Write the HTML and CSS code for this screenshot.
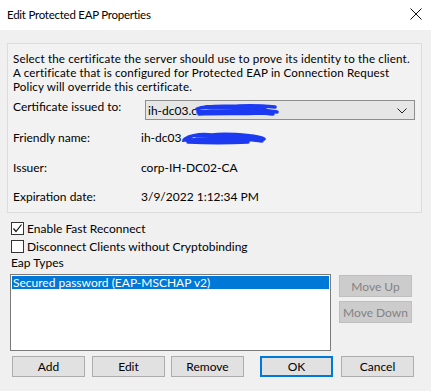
FILE: index.html
```html
<!DOCTYPE html>
<html lang="en">
<head>
    <meta charset="UTF-8">
    <title>Edit Protected EAP Properties</title>
    <link rel="stylesheet" href="styles.css">
</head>
<body>
    <div class="titlebar">
        <span class="title">Edit Protected EAP Properties</span>
        <svg class="close" width="12" height="12" viewBox="0 0 12 12">
            <path d="M0.5 0.5 L11.5 11.5 M11.5 0.5 L0.5 11.5" stroke="#111" stroke-width="1" fill="none"/>
        </svg>
    </div>

    <div class="content">
        <div class="group">
            <div class="intro">
                <div>Select the certificate the server should use to prove its identity to the client.</div>
                <div>A certificate that is configured for Protected EAP in Connection Request</div>
                <div>Policy will override this certificate.</div>
            </div>

            <div class="row row-combo">
                <span class="label">Certificate issued to:</span>
                <div class="combo">
                    <span class="value">ih-dc03.c</span>
                    <svg class="scribble" width="84" height="14" viewBox="0 0 84 14">
                        <path d="M2 6 C12 2 30 4 44 3 C58 2 70 3 80 4 M3 9 C20 7 40 8 60 7 C70 7 76 8 82 9 M4 11 C24 10 46 11 66 10 C72 10 76 11 78 11 M10 4 L70 5" stroke="#1b3af2" stroke-width="3.5" fill="none" stroke-linecap="round"/>
                    </svg>
                    <svg class="chevron" width="10" height="6" viewBox="0 0 10 6">
                        <path d="M0.5 0.5 L5 5 L9.5 0.5" stroke="#222" stroke-width="1" fill="none"/>
                    </svg>
                </div>
            </div>

            <div class="row row-friendly">
                <span class="label">Friendly name:</span>
                <span class="value">ih-dc03.</span>
                <svg class="scribble" width="84" height="14" viewBox="0 0 84 14">
                    <path d="M3 8 C10 4 20 3 30 4 C44 2 60 4 70 5 C76 6 80 7 82 8 M2 9 C22 8 42 9 62 8 C72 9 78 10 80 10 M6 11 C26 12 46 12 66 11 M14 5 L74 6" stroke="#1b3af2" stroke-width="3.5" fill="none" stroke-linecap="round"/>
                </svg>
            </div>

            <div class="row row-issuer">
                <span class="label">Issuer:</span>
                <span class="value">corp-IH-DC02-CA</span>
            </div>

            <div class="row row-expire">
                <span class="label">Expiration date:</span>
                <span class="value">3/9/2022 1:12:34 PM</span>
            </div>
        </div>

        <div class="check first">
            <span class="box">
                <svg width="11" height="11" viewBox="0 0 11 11">
                    <path d="M1.5 5.5 L4 8.5 L9.5 1.5" stroke="#111" stroke-width="1.2" fill="none"/>
                </svg>
            </span>
            Enable Fast Reconnect
        </div>
        <div class="check">
            <span class="box"></span>
            Disconnect Clients without Cryptobinding
        </div>

        <div class="eap-title">Eap Types</div>

        <div class="eap-row">
            <div class="list">
                <div class="item selected">Secured password (EAP-MSCHAP v2)</div>
            </div>
            <div class="side">
                <button class="btn" disabled>Move Up</button>
                <button class="btn" disabled>Move Down</button>
            </div>
        </div>

        <div class="buttons">
            <button class="btn">Add</button>
            <button class="btn">Edit</button>
            <button class="btn">Remove</button>
            <button class="btn btn-ok">OK</button>
            <button class="btn">Cancel</button>
        </div>
    </div>
</body>
</html>
```

FILE: styles.css
```css
body {
    margin: 0;
    width: 431px;
    height: 391px;
    background-color: #f0f0f0;
    font-family: Lato, "Noto Sans", sans-serif;
    font-size: 12px;
    color: #000;
    overflow: hidden;
}
.titlebar {
    height: 30px;
    background-color: #fff;
    display: flex;
    align-items: center;
    justify-content: space-between;
    padding: 0 9px 0 7px;
}
.title {
    font-size: 11.5px;
    letter-spacing: -0.25px;
    margin-top: -1px;
}
.close {
    margin-top: -2px;
}
.content {
    padding: 13px 9px 0 7px;
}
.group {
    height: 160px;
    border: 1px solid #dcdcdc;
    background-color: #f2f2f2;
    padding: 8px 6px 0 5px;
}
.intro {
    white-space: nowrap;
    font-size: 11.6px;
    letter-spacing: 0.15px;
}
.intro div {
    height: 14px;
    line-height: 14px;
}
.row {
    display: flex;
    align-items: center;
    height: 14px;
    line-height: 14px;
}
.label {
    width: 128px;
    flex-shrink: 0;
}
.row-combo {
    margin-top: 6px;
    height: 20px;
    align-items: flex-start;
}
.combo {
    position: relative;
    margin-left: 4px;
    width: 268px;
    height: 18px;
    border: 1px solid #8e8e8e;
    background-color: #e6e6e6;
    display: flex;
    align-items: center;
    padding-left: 2px;
}
.combo .value {
    margin-top: 1px;
}
.chevron {
    position: absolute;
    right: 7px;
    top: 7px;
}
.scribble {
    margin-left: -2px;
}
.row-friendly {
    margin-top: 11px;
}
.row-issuer {
    margin-top: 16px;
}
.row-expire {
    margin-top: 15px;
}
.check {
    display: flex;
    align-items: center;
    height: 18px;
    padding-left: 4px;
}
.check.first {
    margin-top: 6px;
}
.box {
    width: 11px;
    height: 11px;
    border: 1px solid #333;
    background-color: #fff;
    margin-right: 3px;
    display: flex;
}
.eap-title {
    height: 14px;
    line-height: 14px;
    margin-top: 1px;
    padding-left: 4px;
}
.eap-row {
    display: flex;
    margin-top: 4px;
}
.list {
    margin-left: 3px;
    width: 317px;
    height: 73px;
    border: 1px solid #7a7a7a;
    background-color: #fff;
    padding: 1px;
}
.item {
    height: 13px;
    line-height: 13px;
    padding-left: 1px;
}
.selected {
    background-color: #0078d7;
    color: #fff;
}
.side {
    display: flex;
    flex-direction: column;
    gap: 4px;
    margin-left: 8px;
    margin-top: 1px;
}
.btn {
    width: 73px;
    height: 21px;
    padding: 0;
    font-family: inherit;
    font-size: 12px;
    color: #000;
    background-color: #e1e1e1;
    border: 1px solid #adadad;
    border-radius: 0;
}
.btn:disabled {
    height: 22px;
    background-color: #cccccc;
    border-color: #bfbfbf;
    color: #838383;
}
.btn-ok {
    border: 2px solid #0078d7;
}
.buttons {
    display: flex;
    margin-top: 5px;
    padding-left: 5px;
}
.buttons .btn:nth-child(2) {
    margin-left: 7px;
}
.buttons .btn:nth-child(3) {
    margin-left: 6px;
}
.buttons .btn:nth-child(4) {
    margin-left: 16px;
}
.buttons .btn:nth-child(5) {
    margin-left: 8px;
}
```
